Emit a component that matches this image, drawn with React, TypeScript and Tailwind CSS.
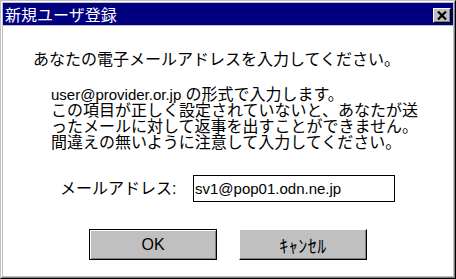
const jp = "font-['Noto_Sans_CJK_JP',sans-serif]";
const mixed = "font-['Liberation_Sans','Noto_Sans_CJK_JP',sans-serif]";

function CloseButton() {
  return (
    <div className="mt-[5px] mr-[2px] flex h-[15px] w-[18px] items-center justify-center border-t border-l border-t-white border-l-white border-r border-b border-r-black border-b-black bg-[#c0c0c0] shadow-[inset_-1px_-1px_0_#808080]">
      <svg width="10" height="9" viewBox="0 0 10 9" className="mb-[1px]">
        <path d="M1 0.5 L9 8.5 M9 0.5 L1 8.5" stroke="black" strokeWidth="2.2" fill="none" />
      </svg>
    </div>
  );
}

export default function App() {
  return (
    <div className="h-[279px] w-[456px] border border-t-[#c0c0c0] border-l-[#c0c0c0] border-r-black border-b-black">
      <div className="flex h-full w-full flex-col border border-t-white border-l-white border-r-[#808080] border-b-[#808080] bg-[#c0c0c0] p-px">
        {/* title bar */}
        <div className="flex h-[22px] shrink-0 items-start justify-between bg-[#000080]">
          <span className={`${jp} ml-[2px] self-center text-[16px] leading-4 text-white`}>新規ユーザ登録</span>
          <CloseButton />
        </div>

        {/* body */}
        <div className="mt-px flex flex-1 flex-col bg-white text-black">
          <p className={`${jp} ml-[30px] mt-[24px] whitespace-nowrap text-[16px] leading-4`}>
            あなたの電子メールアドレスを入力してください。
          </p>

          <p className={`${mixed} ml-[48px] mt-[21px] whitespace-nowrap text-[16px] leading-4`}>
            <span className="text-[15px]">user@provider.or.jp </span>の形式で入力します。
            <br />
            この項目が正しく設定されていないと、あなたが送
            <br />
            ったメールに対して返事を出すことができません。
            <br />
            間違えの無いように注意して入力してください。
          </p>

          <div className="ml-[57px] mt-[24px] flex items-center">
            <span className={`${mixed} w-[133px] text-[16px] leading-4`}>メールアドレス:</span>
            <div className="flex h-[27px] w-[202px] items-center border border-black bg-white pl-px">
              <span className="font-['Liberation_Sans',sans-serif] text-[15px] leading-4">sv1@pop01.odn.ne.jp</span>
            </div>
          </div>

          <div className="ml-[86px] mt-[27px] flex gap-[22px]">
            <button className="flex h-[31px] w-[128px] items-center justify-center border border-black bg-[#c0c0c0] shadow-[inset_1px_1px_0_white,inset_-1px_-1px_0_#808080]">
              <span className="font-['Liberation_Sans',sans-serif] text-[16px] leading-4">OK</span>
            </button>
            <button className="flex h-[31px] w-[128px] items-center justify-center border border-t-white border-l-white border-r-black border-b-black bg-[#c0c0c0] shadow-[inset_-1px_-1px_0_#808080]">
              <span className={`${jp} text-[18px] leading-4 tracking-[0.5px]`}>ｷｬﾝｾﾙ</span>
            </button>
          </div>
        </div>
      </div>
    </div>
  );
}
